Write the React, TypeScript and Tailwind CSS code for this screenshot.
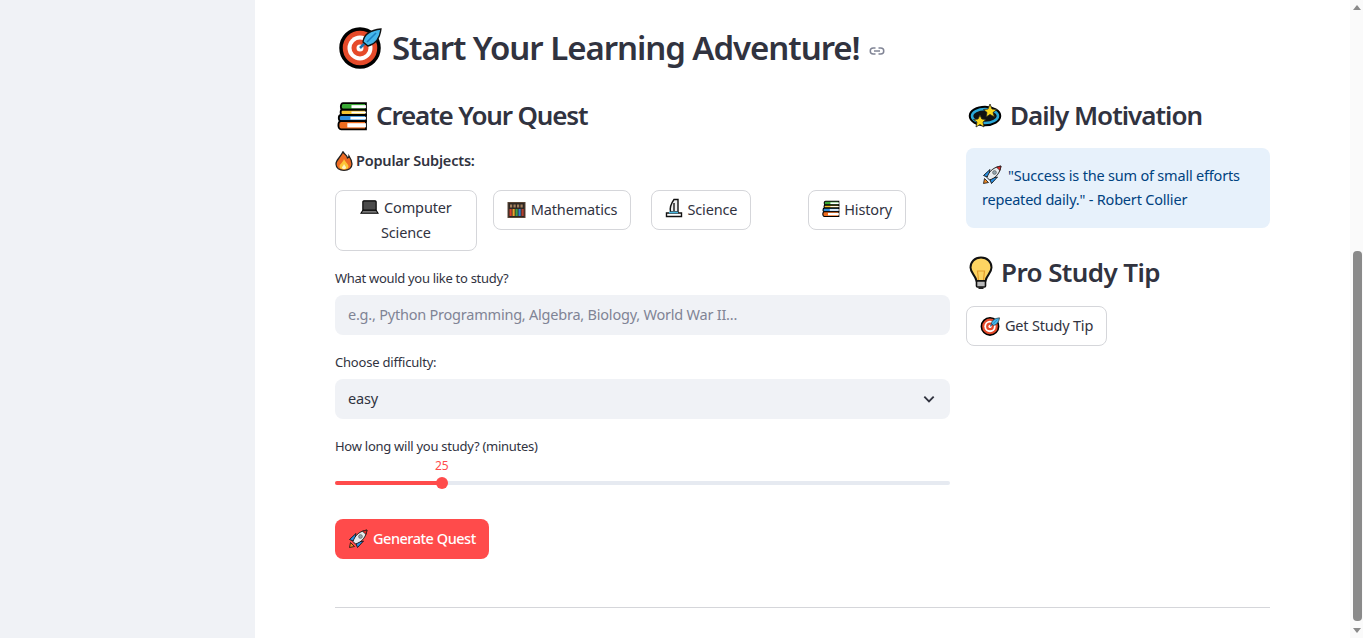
import { ReactNode } from "react";

const Target = ({ className }: { className: string }) => (
  <svg viewBox="0 0 44 44" className={className}>
    <circle cx="22" cy="23" r="19" fill="#e64a2a" stroke="#000" strokeWidth="3.5" />
    <circle cx="22" cy="23" r="12.5" fill="#fff" />
    <circle cx="22" cy="23" r="8.5" fill="#e64a2a" />
    <circle cx="22" cy="23" r="3.5" fill="#fff" />
    <path d="M22 23 L32 13" stroke="#1c6fb0" strokeWidth="2.5" />
    <path d="M25 17 C26 9 33 5 43 4 C42 12 38 19 30 21 Z" fill="#45b6ea" stroke="#111" strokeWidth="1.3" />
    <path d="M29 17 L38 8" stroke="#1c7fc0" strokeWidth="1.6" />
  </svg>
);

const Books = ({ className }: { className: string }) => (
  <svg viewBox="0 0 30 30" className={className}>
    <path d="M6 2 H28 V8.5 H6 C3 8.5 3 2 6 2 Z" fill="#3aa935" stroke="#000" strokeWidth="1.8" />
    <rect x="14" y="4" width="14" height="3" fill="#fff" />
    <path d="M5 8.5 H28 V13.5 H5 C3 13.5 3 8.5 5 8.5 Z" fill="#f4c430" stroke="#000" strokeWidth="1.8" />
    <rect x="14" y="10.2" width="14" height="1.8" fill="#fff" />
    <path d="M4 13.5 H28 V19.5 H4 C1 19.5 1 13.5 4 13.5 Z" fill="#2f8fdc" stroke="#000" strokeWidth="1.8" />
    <rect x="13" y="15.3" width="15" height="2.6" fill="#fff" />
    <path d="M4 19.5 H28 V27.5 H4 C0.5 27.5 0.5 19.5 4 19.5 Z" fill="#ee6c1f" stroke="#000" strokeWidth="1.8" />
    <rect x="10" y="21.5" width="18" height="4" fill="#fff" />
  </svg>
);

const Fire = ({ className }: { className: string }) => (
  <svg viewBox="0 0 18 20" className={className}>
    <path d="M8 0.8 C10 4 12 4 12.5 7 C13.5 6.5 14 6 14 5 C16 8 17 10 17 13 C17 17 13.5 19.3 9 19.3 C4.5 19.3 1 17 1 13 C1 9 5 7 8 0.8 Z" fill="#ee6a22" stroke="#222" strokeWidth="1.3" />
    <path d="M9 8 C10 11 13.5 13 13.5 15.5 C13.5 17.5 11.5 18.5 9 18.5 C6.5 18.5 4.5 17.5 4.5 15.5 C4.5 13 8 11.5 9 8 Z" fill="#fcc537" />
    <path d="M9 13 C10 15 11 15.5 11 16.5 C11 17.5 10 18 9 18 C8 18 7 17.5 7 16.5 C7 15.5 8.5 15 9 13 Z" fill="#fff2c0" />
  </svg>
);

const Laptop = ({ className }: { className: string }) => (
  <svg viewBox="0 0 20 16" className={className}>
    <rect x="3" y="1.5" width="14" height="10" rx="1" fill="#4a4a4a" stroke="#000" strokeWidth="1.2" />
    <path d="M3 11.5 H17 L19 14.5 H1 Z" fill="#777" stroke="#000" strokeWidth="1.1" />
  </svg>
);

const Abacus = ({ className }: { className: string }) => (
  <svg viewBox="0 0 18 16" className={className}>
    <rect x="0.5" y="0.5" width="17" height="15" fill="#2e2722" stroke="#5a4636" />
    <rect x="2.5" y="2.5" width="2.2" height="3" fill="#a17f5d" />
    <rect x="6" y="2.5" width="2.2" height="3" fill="#a17f5d" />
    <rect x="9.5" y="2.5" width="2.2" height="3" fill="#a17f5d" />
    <rect x="13" y="2.5" width="2.2" height="3" fill="#a17f5d" />
    <rect x="2" y="7" width="2.2" height="7" fill="#d9412e" />
    <rect x="5" y="7" width="2.2" height="7" fill="#e9a32a" />
    <rect x="8" y="7" width="2.2" height="7" fill="#3f9e46" />
    <rect x="11" y="7" width="2.2" height="7" fill="#2e7fd0" />
    <rect x="14" y="7" width="2.2" height="7" fill="#b2402f" />
  </svg>
);

const Microscope = ({ className }: { className: string }) => (
  <svg viewBox="0 0 18 20" className={className}>
    <path d="M9 1.5 L13 1.5 L13 14 H5.5 C4.5 10 6.5 5 9 1.5 Z" fill="#efefef" stroke="#111" strokeWidth="1.4" />
    <path d="M9 5 V13" stroke="#555" strokeWidth="2" />
    <path d="M1.5 15 H16.5 V18.5 H1.5 Z" fill="#fff" stroke="#111" strokeWidth="1.4" />
    <path d="M4 14.5 H13" stroke="#47b6df" strokeWidth="1.6" />
  </svg>
);

const Orbit = ({ className }: { className: string }) => (
  <svg viewBox="0 0 34 28" className={className}>
    <ellipse cx="17" cy="14" rx="15" ry="9" fill="#111" stroke="#000" strokeWidth="2.5" />
    <ellipse cx="17" cy="14" rx="13" ry="7" fill="none" stroke="#2aa7d8" strokeWidth="2.5" />
    <path d="M22 2 L24 7 L29 7.5 L25 10.5 L26.5 15 L22 12.5 L18 15 L19 10.5 L15.5 7.5 L20 7 Z" fill="#f9d71c" stroke="#222" strokeWidth="0.8" />
    <path d="M12 13 L13.8 17 L18 17.5 L15 20 L16 25 L12 22.5 L8 25 L9 20 L5.5 17.5 L10 17 Z" fill="#f9d71c" stroke="#222" strokeWidth="0.8" />
  </svg>
);

const Rocket = ({ className }: { className: string }) => (
  <svg viewBox="0 0 20 20" className={className}>
    <path d="M1.5 18.5 L2.5 13.5 L6.5 17.5 Z" fill="#f08a24" stroke="#111" strokeWidth="0.8" />
    <path d="M1.5 10.5 L8 4.5 L6.5 12.5 Z" fill="#2b93e6" stroke="#111" strokeWidth="0.9" />
    <path d="M9.5 18.5 L15.5 12 L7.5 13.5 Z" fill="#2b93e6" stroke="#111" strokeWidth="0.9" />
    <path d="M5 12.5 C7 6 12 2 19 1 C18 8 14 13 7.5 15 Z" fill="#e6ebee" stroke="#111" strokeWidth="0.9" />
    <path d="M14.5 2.3 L19 1 L18 5.5 Z" fill="#e02a2a" stroke="#111" strokeWidth="0.6" />
    <circle cx="12.5" cy="7.5" r="1.9" fill="#8ea3ad" stroke="#555" strokeWidth="0.6" />
  </svg>
);

const Bulb = ({ className }: { className: string }) => (
  <svg viewBox="0 0 24 34" className={className}>
    <path d="M12 1.5 C5.5 1.5 1.5 6 1.5 11.5 C1.5 17 6.5 19 7.5 25 H16.5 C17.5 19 22.5 17 22.5 11.5 C22.5 6 18.5 1.5 12 1.5 Z" fill="#fdd462" stroke="#111" strokeWidth="2" />
    <path d="M9.5 24 L8.5 15 H15.5 L14.5 24" fill="none" stroke="#e29b2b" strokeWidth="1.2" />
    <rect x="7.5" y="25" width="9" height="6" rx="1" fill="#b9b9b9" stroke="#111" strokeWidth="1.6" />
    <rect x="9.5" y="31" width="5" height="2" fill="#222" />
  </svg>
);

const subjects: { icon: ReactNode; name: string }[] = [
  { icon: <Laptop className="inline-block w-[19px] h-[16px] mr-[5px] align-[-2px]" />, name: "Computer Science" },
  { icon: <Abacus className="inline-block w-[19px] h-[16px] mr-[5px] align-[-3px]" />, name: "Mathematics" },
  { icon: <Microscope className="inline-block w-[18px] h-[20px] mr-[5px] align-[-3px]" />, name: "Science" },
  { icon: <Books className="inline-block w-[18px] h-[18px] mr-[4px] align-[-3px]" />, name: "History" },
];

const fontClass = "font-['Noto_Sans','Liberation_Sans',sans-serif]";

export default function App() {
  return (
    <div className={`flex h-screen w-full overflow-hidden bg-white text-[#31333f] ${fontClass}`}>
      <aside className="w-[255px] shrink-0 bg-[#f0f2f6]" />

      <main className="flex-1 min-w-0 px-[80px] pt-[24px]">
        <div className="flex items-center h-[48px]">
          <Target className="w-[44px] h-[44px] ml-[3px] mr-[10px] -mt-[3px]" />
          <h1 className="text-[33px] leading-[48px] font-semibold tracking-[-1.05px] whitespace-nowrap">
            Start Your Learning Adventure!
          </h1>
          <svg viewBox="0 0 24 24" className="w-[18px] h-[18px] ml-[8px] mt-[6px] text-[#808495]" fill="none" stroke="currentColor" strokeWidth="2">
            <path d="M10 8H7a4 4 0 0 0 0 8h3" />
            <path d="M14 8h3a4 4 0 0 1 0 8h-3" />
            <path d="M8 12h8" />
          </svg>
        </div>

        <div className="flex gap-[16px] mt-[24px]">
          <section className="w-[615px] shrink-0">
            <div className="flex items-center h-[40px]">
              <Books className="w-[31px] h-[31px] ml-[2px] mr-[8px]" />
              <h3 className="text-[26px] leading-[38px] pb-[2px] font-semibold tracking-[-1.15px]">Create Your Quest</h3>
            </div>

            <div className="flex items-center h-[24px] mt-[13px]">
              <Fire className="w-[18px] h-[20px] mr-[3px]" />
              <span className="text-[14.5px] font-semibold tracking-[-0.2px]">Popular Subjects:</span>
            </div>

            <div className="grid grid-cols-4 gap-[16px] mt-[17px] h-[61px] items-start">
              {subjects.map((s) => (
                <div key={s.name}>
                  <button className="min-h-[40px] rounded-lg border border-[#d5d6da] bg-white px-[13px] pt-[3.5px] pb-[5.5px] text-center text-[14.5px] leading-[25px] tracking-[-0.15px] text-[#31333f]">
                    {s.icon}
                    {s.name}
                  </button>
                </div>
              ))}
            </div>

            <label className="block text-[13px] leading-[20px] mt-[17px] tracking-[-0.3px]">What would you like to study?</label>
            <div className="mt-[7px] flex h-[40px] items-center rounded-lg bg-[#f0f2f6] px-[13px] text-[14.5px] tracking-[-0.22px] text-[#808495]">
              e.g., Python Programming, Algebra, Biology, World War II...
            </div>

            <label className="block text-[13px] leading-[20px] mt-[17px] tracking-[-0.2px]">Choose difficulty:</label>
            <div className="mt-[7px] flex h-[40px] items-center justify-between rounded-lg bg-[#f0f2f6] pl-[13px] pr-[14px] text-[14.5px] tracking-[-0.2px]">
              <span>easy</span>
              <svg viewBox="0 0 24 24" className="w-[14px] h-[14px]" fill="none" stroke="#31333f" strokeWidth="3.2">
                <path d="M4 8l8 8 8-8" />
              </svg>
            </div>

            <label className="block text-[13px] leading-[20px] mt-[17px] tracking-[-0.26px]">How long will you study? (minutes)</label>
            <div className="relative h-[47px]">
              <span className="absolute left-[100px] top-[3px] text-[12px] leading-[14px] text-[#ff4b4b]">25</span>
              <div className="absolute inset-x-0 top-[25px] h-[4px] rounded bg-[#e6eaf1]">
                <div className="h-full w-[107px] rounded bg-[#ff4b4b]" />
              </div>
              <div className="absolute left-[101px] top-[21px] h-[12px] w-[12px] rounded-full bg-[#ff4b4b]" />
            </div>

            <button className="mt-[16px] flex h-[40px] items-center rounded-lg bg-[#ff4b4b] px-[13px] text-[14.5px] font-medium tracking-[-0.48px] text-white">
              <Rocket className="w-[20px] h-[20px] mr-[5px]" />
              Generate Quest
            </button>
          </section>

          <section className="flex-1 min-w-0">
            <div className="flex items-center h-[40px]">
              <Orbit className="w-[34px] h-[28px] mr-[8px] ml-[2px]" />
              <h3 className="text-[26px] leading-[38px] pb-[2px] font-semibold tracking-[-1px]">Daily Motivation</h3>
            </div>
            <div className="mt-[12px] h-[80px] rounded-lg bg-[#e7f1fb] px-[16px] pt-[15px] text-[14.5px] leading-[24px] tracking-[-0.2px] text-[#004280]">
              <Rocket className="inline-block w-[20px] h-[20px] mr-[6px] align-[-4px]" />
              "Success is the sum of small efforts repeated daily." - Robert Collier
            </div>
            <div className="flex items-center h-[40px] mt-[25px]">
              <Bulb className="w-[24px] h-[34px] ml-[3px] mr-[8px]" />
              <h3 className="text-[26px] leading-[38px] pb-[2px] font-semibold tracking-[-0.6px]">Pro Study Tip</h3>
            </div>
            <button className="mt-[13px] flex h-[40px] items-center rounded-lg border border-[#d5d6da] bg-white px-[13px] text-[14.5px] tracking-[-0.2px]">
              <Target className="w-[20px] h-[20px] mr-[5px]" />
              Get Study Tip
            </button>
          </section>
        </div>

        <hr className="mt-[48px] border-0 border-t border-[#d5d6da]" />
      </main>

      <div className="flex w-[13px] shrink-0 flex-col items-center bg-[#fafafa]">
        <div className="mt-[5px] h-0 w-0 ml-[1px] border-x-[4.5px] border-b-[5px] border-x-transparent border-b-[#8a8a8a]" />
        <div className="mt-[241px] h-[370px] w-[9px] ml-[1px] rounded-[4px] bg-[#8a8a8a]" />
        <div className="mt-[7px] h-0 w-0 ml-[1px] border-x-[4.5px] border-t-[5px] border-x-transparent border-t-[#8a8a8a]" />
      </div>
    </div>
  );
}
